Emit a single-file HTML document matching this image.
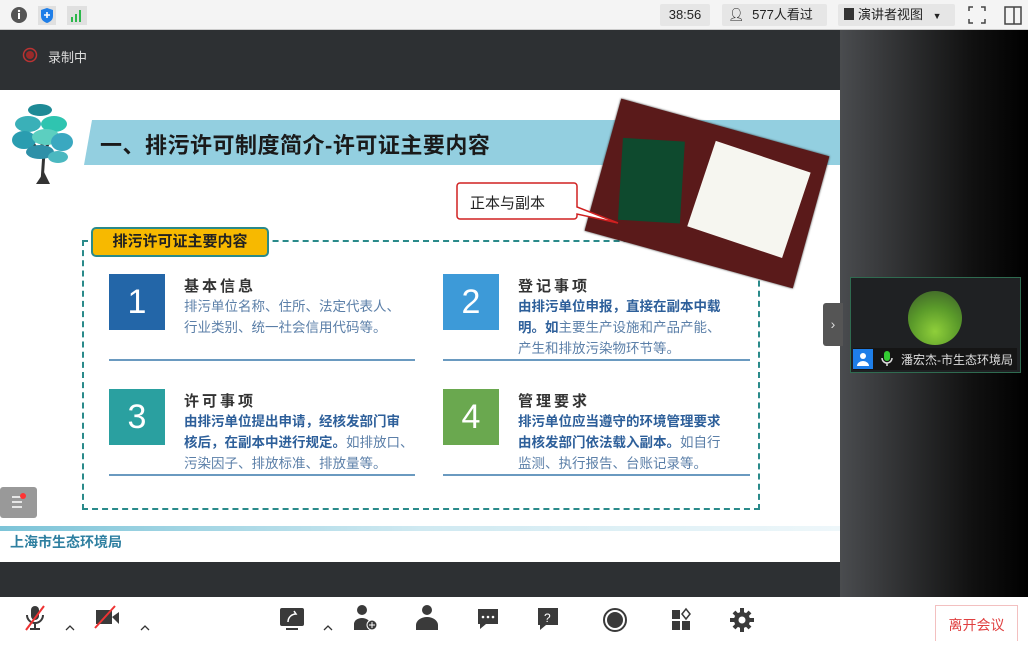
<!DOCTYPE html>
<html><head><meta charset="utf-8"><style>
*{margin:0;padding:0;box-sizing:border-box}
body{width:1028px;height:649px;overflow:hidden;position:relative;background:#2d3033;font-family:"Liberation Sans","Noto Sans CJK SC",sans-serif}
.a{position:absolute}
.top{left:0;top:0;width:1028px;height:30px;background:#f4f4f4;border-bottom:1px solid #ccc}
.btn{top:4px;height:22px;background:#e6e6e6;border-radius:2px;font-size:13px;color:#222;line-height:22px;padding:0 6px}
.slide{left:0;top:90px;width:840px;height:472px;background:#fff}
.right{left:840px;top:30px;width:188px;height:567px;background:linear-gradient(90deg,#4a4c4f,#111 70%,#000)}
.bottom{left:0;top:597px;width:1028px;height:52px;background:#fff}
.num{width:56px;height:56px;color:#fff;font-size:34px;text-align:center;line-height:56px}
.tt{font-size:15px;font-weight:bold;color:#333;letter-spacing:3px}
.ds{font-size:13.5px;color:#5b7fa8;line-height:21px;white-space:nowrap}
.ds b{color:#2d5f9a}
.ln{height:2px;background:#6a9ac0}
</style></head><body>
<div class="a top"></div>
<svg class="a" style="left:10px;top:6px" width="80" height="20">
<circle cx="9" cy="9" r="8" fill="#555"/><rect x="8" y="7" width="2" height="6" fill="#fff"/><circle cx="9" cy="5" r="1.2" fill="#fff"/>
<rect x="28" y="0" width="18" height="19" fill="#e0e0e0"/><path d="M37 2 L43 4 V10 C43 14 40 16 37 17 C34 16 31 14 31 10 V4Z" fill="#1e7ee8"/><path d="M37 6v6M34 9h6" stroke="#fff" stroke-width="1.6"/>
<rect x="57" y="0" width="20" height="19" fill="#e0e0e0"/><rect x="61" y="11" width="2" height="5" fill="#2cb84b"/><rect x="65" y="8" width="2" height="8" fill="#2cb84b"/><rect x="69" y="4" width="2" height="12" fill="#2cb84b"/>
</svg>
<div class="a btn" style="left:660px;width:50px;text-align:center">38:56</div>
<div class="a btn" style="left:722px;width:105px">&#x1F464;&#xFE0E; <span style="margin-left:4px">577人看过</span></div>
<div class="a btn" style="left:838px;width:117px"><span style="display:inline-block;width:10px;height:12px;background:#333;vertical-align:-1px;margin-right:4px"></span>演讲者视图 <span style="font-size:9px;margin-left:6px">▼</span></div>
<svg class="a" style="left:968px;top:6px" width="60" height="20"><path d="M1 5V1H5M13 1H17V5M17 13V17H13M5 17H1V13" stroke="#444" stroke-width="1.5" fill="none"/><rect x="37" y="1" width="16" height="17" fill="none" stroke="#444" stroke-width="1.5"/><line x1="46" y1="1" x2="46" y2="18" stroke="#444" stroke-width="1.5"/></svg>
<svg class="a" style="left:22px;top:47px" width="16" height="16"><circle cx="8" cy="8" r="6.5" fill="none" stroke="#b33" stroke-width="1.5"/><circle cx="8" cy="8" r="4" fill="#9a2a2a"/></svg>
<div class="a" style="left:48px;top:47px;font-size:13px;color:#ddd">录制中</div>

<div class="a slide">
<svg class="a" style="left:10px;top:12px" width="66" height="82"><path d="M32 80 L34 50 L30 35 M34 50 L44 30 M33 55 L22 40" stroke="#333" stroke-width="3" fill="none"/><path d="M26 82 L40 82 L34 70Z" fill="#333"/>
<ellipse cx="30" cy="8" rx="12" ry="6" fill="#1e8a96"/><ellipse cx="18" cy="22" rx="13" ry="8" fill="#3ab0b8"/><ellipse cx="44" cy="22" rx="13" ry="8" fill="#2fc4b0"/><ellipse cx="14" cy="38" rx="12" ry="9" fill="#2a9db0"/><ellipse cx="36" cy="35" rx="14" ry="8" fill="#5ccfc0"/><ellipse cx="52" cy="40" rx="11" ry="9" fill="#3aa8c0"/><ellipse cx="30" cy="50" rx="14" ry="7" fill="#2e90a8"/><ellipse cx="48" cy="55" rx="10" ry="6" fill="#4bb8c0"/></svg>
<div class="a" style="left:84px;top:30px;width:756px;height:45px;background:#93cfe0;clip-path:polygon(8px 0,100% 0,100% 100%,0 100%)"></div>
<div class="a" style="left:100px;top:38px;font-size:22px;letter-spacing:0.5px;font-weight:bold;color:#1a1a1a;white-space:nowrap">一、排污许可制度简介-许可证主要内容</div>
<div class="a" style="left:82px;top:150px;width:678px;height:270px;border:2px dashed #2a8a8a"></div>
<div class="a" style="left:91px;top:137px;width:178px;height:30px;background:#f7b900;border:2px solid #2a8a8a;border-radius:5px;font-size:15px;font-weight:bold;color:#222;text-align:center;line-height:26px">排污许可证主要内容</div>

<div class="a num" style="left:109px;top:184px;background:#2366a8">1</div>
<div class="a tt" style="left:184px;top:185px">基本信息</div>
<div class="a ds" style="left:184px;top:206px">排污单位名称、住所、法定代表人、<br>行业类别、统一社会信用代码等。</div>
<div class="a ln" style="left:109px;top:269px;width:306px"></div>

<div class="a num" style="left:443px;top:184px;background:#3d9ad8">2</div>
<div class="a tt" style="left:518px;top:185px">登记事项</div>
<div class="a ds" style="left:518px;top:206px"><b>由排污单位申报，直接在副本中载<br>明。如</b>主要生产设施和产品产能、<br>产生和排放污染物环节等。</div>
<div class="a ln" style="left:443px;top:269px;width:307px"></div>

<div class="a num" style="left:109px;top:299px;background:#2aa0a0">3</div>
<div class="a tt" style="left:184px;top:300px">许可事项</div>
<div class="a ds" style="left:184px;top:321px"><b>由排污单位提出申请，经核发部门审<br>核后，在副本中进行规定。</b>如排放口、<br>污染因子、排放标准、排放量等。</div>
<div class="a ln" style="left:109px;top:384px;width:306px"></div>

<div class="a num" style="left:443px;top:299px;background:#6aa84f">4</div>
<div class="a tt" style="left:518px;top:300px">管理要求</div>
<div class="a ds" style="left:518px;top:321px"><b>排污单位应当遵守的环境管理要求<br>由核发部门依法载入副本。</b>如自行<br>监测、执行报告、台账记录等。</div>
<div class="a ln" style="left:443px;top:384px;width:307px"></div>

<div class="a" style="left:599px;top:35px;width:216px;height:137px;background:#5a1a1a;transform:rotate(15.5deg);box-shadow:0 0 2px #333">
<div class="a" style="left:20px;top:30px;width:62px;height:82px;background:#0e4a2e;transform:rotate(-12deg)"></div>
<div class="a" style="left:100px;top:18px;width:100px;height:90px;background:#f6f6f0;transform:rotate(3deg)"></div>
</div>
<svg class="a" style="left:456px;top:91px" width="170" height="50"><path d="M4 2H118a3 3 0 0 1 3 3V26L162 42L121 33V35a3 3 0 0 1-3 3H4a3 3 0 0 1-3-3V5a3 3 0 0 1 3-3Z" fill="#fff" stroke="#d02020" stroke-width="1.5"/></svg>
<div class="a" style="left:470px;top:102px;font-size:15px;color:#222">正本与副本</div>

<div class="a" style="left:0;top:397px;width:37px;height:31px;background:#999;border-radius:3px"></div>
<svg class="a" style="left:8px;top:401px" width="22" height="22"><path d="M4 6h10M4 11h10M4 16h10" stroke="#fff" stroke-width="1.5"/><circle cx="15" cy="5" r="3" fill="#f33"/></svg>
<div class="a" style="left:0;top:436px;width:840px;height:5px;background:linear-gradient(90deg,#7cc4d8,#cfe9f1 50%,#eef7fa)"></div>
<div class="a" style="left:10px;top:442px;font-size:14px;font-weight:bold;color:#2e7fa0">上海市生态环境局</div>
</div>

<div class="a right"></div>
<div class="a" style="left:823px;top:303px;width:20px;height:43px;background:#555;border-radius:3px 0 0 3px;color:#ddd;font-size:14px;line-height:43px;text-align:center">›</div>
<div class="a" style="left:850px;top:277px;width:171px;height:96px;background:#1f2123;border:1px solid #2f6b50"></div>
<div class="a" style="left:908px;top:291px;width:54px;height:54px;border-radius:50%;background:radial-gradient(circle at 50% 75%,#8fcf3a,#5a9a2a 50%,#3a5a2a)"></div>
<div class="a" style="left:853px;top:348px;width:164px;height:22px;background:#151515"></div>
<div class="a" style="left:853px;top:349px;width:20px;height:20px;background:#1e7ee8"></div>
<svg class="a" style="left:855px;top:351px" width="16" height="16"><circle cx="8" cy="5" r="3" fill="#fff"/><path d="M2 15a6 5 0 0 1 12 0Z" fill="#fff"/></svg>
<svg class="a" style="left:880px;top:350px" width="14" height="18"><rect x="4" y="1" width="6" height="10" rx="3" fill="#3c3"/><path d="M2 8a5 5 0 0 0 10 0M7 13v3" stroke="#ddd" stroke-width="1.5" fill="none"/></svg>
<div class="a" style="left:901px;top:351px;font-size:12px;color:#ddd">潘宏杰-市生态环境局</div>

<div class="a bottom"></div>
<svg class="a" style="left:0;top:600px" width="780" height="40" fill="#3a3a3a">
<rect x="31" y="6" width="8" height="14" rx="4"/><path d="M27 15a8 8 0 0 0 16 0M35 23v6M30 29h10" stroke="#3a3a3a" stroke-width="2" fill="none"/><path d="M26 30L44 6" stroke="#e33" stroke-width="2"/>
<path d="M66 30l4-4 4 4" stroke="#333" fill="none" stroke-width="1.3"/>
<rect x="96" y="10" width="16" height="14"/><path d="M112 17l7-5v12z"/><path d="M95 28L115 6" stroke="#e33" stroke-width="2"/>
<path d="M141 30l4-4 4 4" stroke="#333" fill="none" stroke-width="1.3"/>
<rect x="280" y="8" width="24" height="18" rx="2"/><rect x="286" y="28" width="12" height="2"/><path d="M288 22c0-5 4-8 8-8l-2-3" stroke="#fff" fill="none" stroke-width="1.5"/>
<path d="M324 30l4-4 4 4" stroke="#333" fill="none" stroke-width="1.3"/>
<circle cx="362" cy="10" r="5"/><path d="M354 30v-6a8 6 0 0 1 16 0v6z"/><circle cx="372" cy="25" r="5" fill="#3a3a3a" stroke="#fff"/><path d="M372 22v6M369 25h6" stroke="#fff"/>
<circle cx="427" cy="10" r="5"/><path d="M416 30v-5a11 8 0 0 1 22 0v5z"/>
<path d="M478 9h20v15h-12l-6 5v-5h-2z"/><circle cx="483" cy="17" r="1.3" fill="#fff"/><circle cx="488" cy="17" r="1.3" fill="#fff"/><circle cx="493" cy="17" r="1.3" fill="#fff"/>
<path d="M538 8h20v17h-12l-6 5v-5h-2z"/><text x="544" y="22" font-size="12" fill="#fff" font-family="Liberation Sans">?</text>
<circle cx="615" cy="20" r="11" fill="none" stroke="#3a3a3a" stroke-width="2"/><circle cx="615" cy="20" r="8"/>
<rect x="672" y="10" width="8" height="9"/><rect x="672" y="21" width="8" height="9"/><rect x="682" y="21" width="8" height="9"/><path d="M686 9l4 5-4 5-4-5z" fill="none" stroke="#3a3a3a" stroke-width="1.5"/>
<circle cx="742" cy="20" r="8"/><path d="M742 8v24M730 20h24M734 12l16 16M750 12l-16 16" stroke="#3a3a3a" stroke-width="4"/><circle cx="742" cy="20" r="3.5" fill="#fff"/>
</svg>
<div class="a" style="left:935px;top:605px;width:83px;height:36px;border:1px solid #f3c0c0;border-bottom:none;color:#e04040;font-size:14px;text-align:center;line-height:38px">离开会议</div>
</body></html>
